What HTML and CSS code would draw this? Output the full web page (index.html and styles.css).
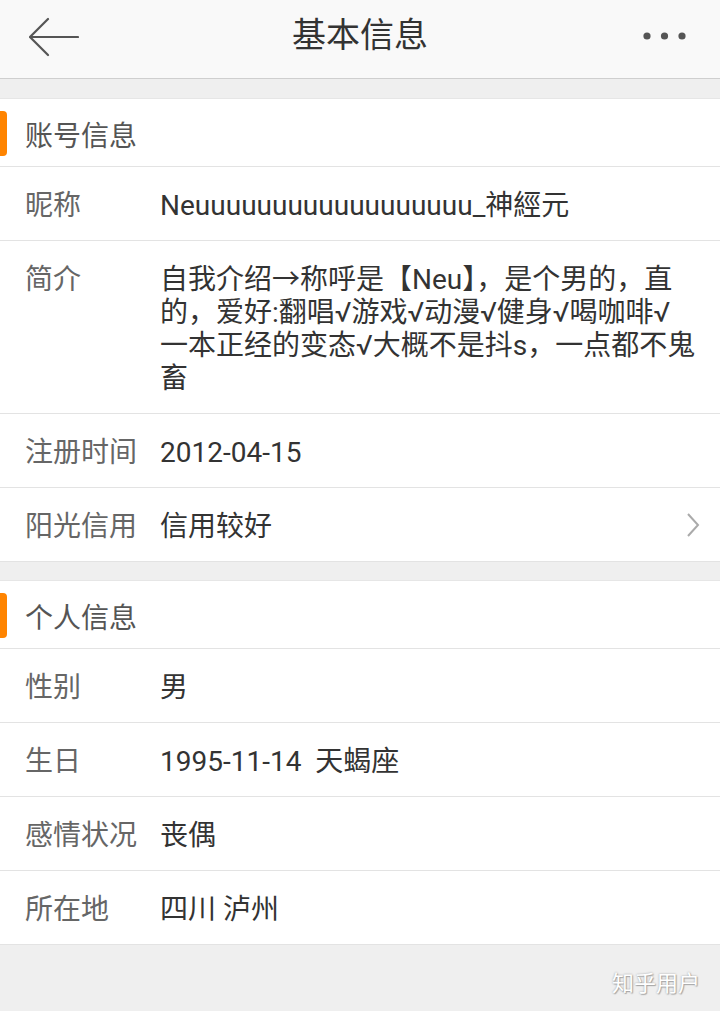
FILE: index.html
```html
<!DOCTYPE html>
<html lang="zh-CN">
<head>
<meta charset="utf-8">
<link rel="stylesheet" href="styles.css">
</head>
<body>
<div class="page">
  <header class="topbar">
    <svg class="back" width="50" height="40" viewBox="0 0 50 40"><path d="M1 20 H49 M19 2 L1 20 L19 38" fill="none" stroke="#555" stroke-width="2.2" stroke-linecap="round" stroke-linejoin="round"/></svg>
    <div class="title">基本信息</div>
    <svg class="more" width="44" height="10" viewBox="0 0 44 10"><circle cx="4" cy="5" r="3.6" fill="#555"/><circle cx="21.5" cy="5" r="3.6" fill="#555"/><circle cx="39" cy="5" r="3.6" fill="#555"/></svg>
  </header>

  <section class="card">
    <div class="sec-head"><span class="mark"></span>账号信息</div>
    <div class="row"><div class="label">昵称</div><div class="value">Neuuuuuuuuuuuuuuuuuu_神經元</div></div>
    <div class="row"><div class="label">简介</div><div class="value"><span class="line">自我介绍→称呼是【Neu】，是个男的，直</span><span class="line">的，爱好:翻唱√游戏√动漫√健身√喝咖啡√</span><span class="line">一本正经的变态√大概不是抖s，一点都不鬼</span><span class="line">畜</span></div></div>
    <div class="row"><div class="label">注册时间</div><div class="value">2012-04-15</div></div>
    <div class="row"><div class="label">阳光信用</div><div class="value">信用较好</div>
      <svg class="chev" width="14" height="24" viewBox="0 0 14 24"><path d="M2 1 L12 12 L2 23" fill="none" stroke="#aaa" stroke-width="2"/></svg>
    </div>
  </section>

  <section class="card">
    <div class="sec-head"><span class="mark"></span>个人信息</div>
    <div class="row"><div class="label">性别</div><div class="value">男</div></div>
    <div class="row"><div class="label">生日</div><div class="value">1995-11-14&nbsp; 天蝎座</div></div>
    <div class="row"><div class="label">感情状况</div><div class="value">丧偶</div></div>
    <div class="row"><div class="label">所在地</div><div class="value">四川 泸州</div></div>
  </section>

  <div class="watermark">知乎用户</div>
</div>
</body>
</html>
```

FILE: styles.css
```css
html, body {
  margin: 0;
  padding: 0;
}
body {
  background: #efefef;
  font-family: Roboto, "Noto Sans CJK SC", sans-serif;
  width: 720px;
  height: 1011px;
  overflow: hidden;
}
.page {
  display: flex;
  flex-direction: column;
  height: 1011px;
}
.topbar {
  height: 79px;
  box-sizing: border-box;
  background: #f9f9f9;
  border-bottom: 1px solid #cfcfcf;
  display: flex;
  align-items: center;
  justify-content: space-between;
  padding: 0 33px 0 29px;
  position: relative;
  flex-shrink: 0;
}
.back {
  display: block;
  margin-top: -4px;
}
.more {
  display: block;
  margin-top: -6px;
}
.title {
  position: absolute;
  left: 0;
  right: 0;
  top: 0;
  text-align: center;
  line-height: 70px;
  font-size: 34px;
  color: #333;
  pointer-events: none;
}
.card {
  background: #fff;
  margin-top: 19px;
  border-top: 1px solid #e6e6e6;
  border-bottom: 1px solid #e3e3e3;
}
.card + .card {
  margin-top: 18px;
}
.sec-head {
  height: 67px;
  display: flex;
  align-items: center;
  padding-left: 25px;
  padding-top: 2px;
  box-sizing: border-box;
  font-size: 28px;
  color: #555;
  position: relative;
}
.mark {
  position: absolute;
  left: 0;
  top: 12px;
  width: 7px;
  height: 45px;
  background: #ff8400;
  border-radius: 0 4px 4px 0;
}
.row {
  display: flex;
  align-items: flex-start;
  border-top: 1px solid #e3e3e3;
  padding: 22px 20px 18px 25px;
  font-size: 28px;
  line-height: 33px;
  position: relative;
}
.label {
  width: 135px;
  flex-shrink: 0;
  color: #666;
}
.value {
  flex: 1;
  color: #333;
}
.line {
  display: block;
  white-space: nowrap;
}
.chev {
  position: absolute;
  right: 20px;
  top: 25px;
}
.watermark {
  margin-top: auto;
  align-self: flex-end;
  margin-right: 20px;
  margin-bottom: 14px;
  font-size: 22px;
  color: #fff;
  text-shadow: 0 0 2px #999, 1px 1px 1px #aaa;
}
```
